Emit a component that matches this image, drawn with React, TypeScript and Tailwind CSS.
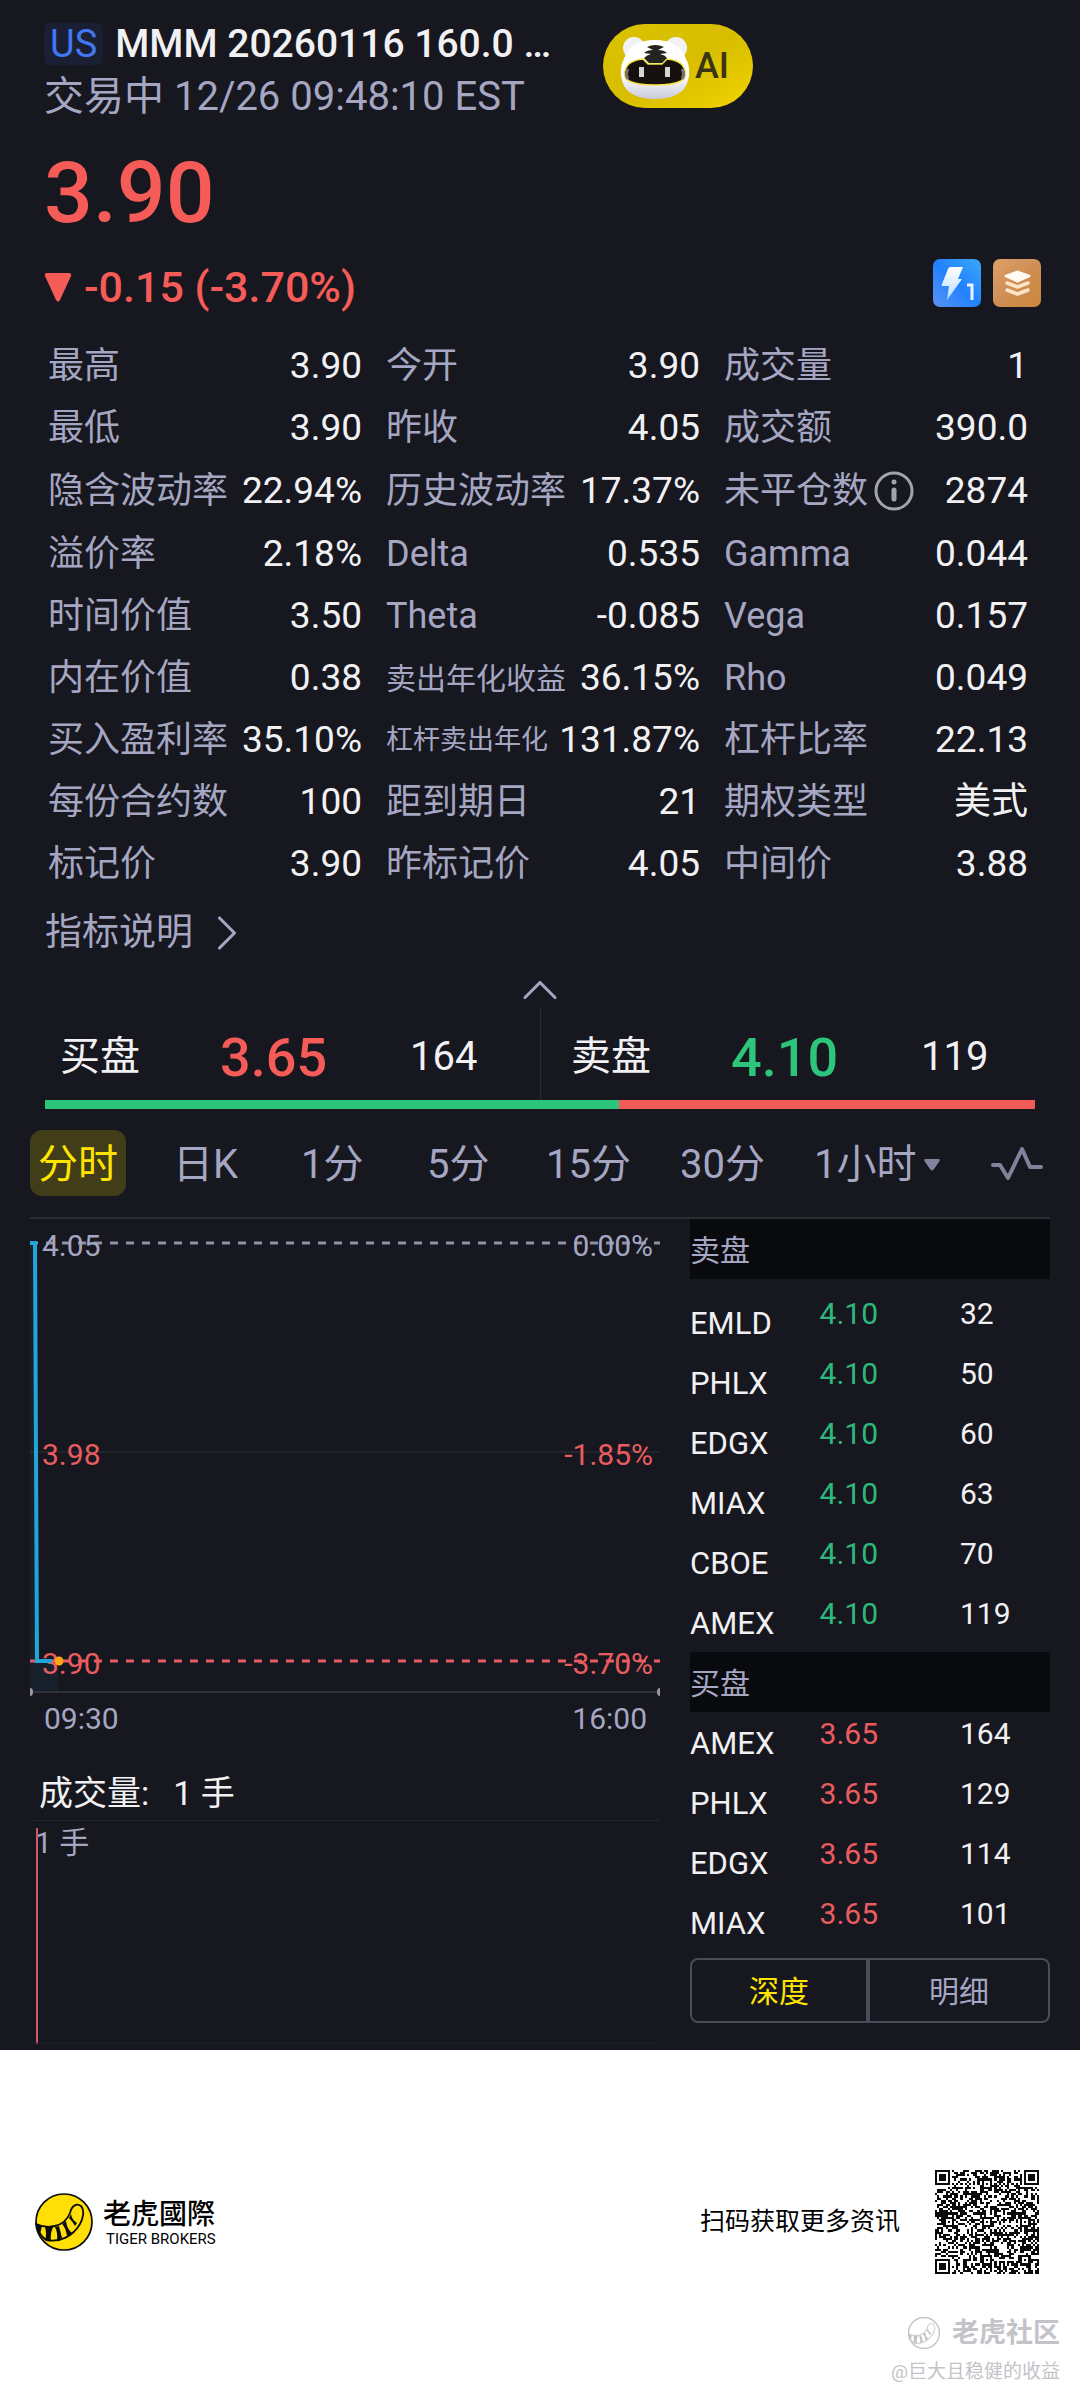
import { ChevronRight, ChevronUp } from "lucide-react";
import { clsx } from "clsx";

type Stat = { label: string; value: string; size?: "sm" | "xs"; info?: boolean };

const STATS: Stat[] = [
	{ label: "最高", value: "3.90" },
	{ label: "今开", value: "3.90" },
	{ label: "成交量", value: "1" },
	{ label: "最低", value: "3.90" },
	{ label: "昨收", value: "4.05" },
	{ label: "成交额", value: "390.0" },
	{ label: "隐含波动率", value: "22.94%" },
	{ label: "历史波动率", value: "17.37%" },
	{ label: "未平仓数", value: "2874", info: true },
	{ label: "溢价率", value: "2.18%" },
	{ label: "Delta", value: "0.535" },
	{ label: "Gamma", value: "0.044" },
	{ label: "时间价值", value: "3.50" },
	{ label: "Theta", value: "-0.085" },
	{ label: "Vega", value: "0.157" },
	{ label: "内在价值", value: "0.38" },
	{ label: "卖出年化收益", value: "36.15%", size: "sm" },
	{ label: "Rho", value: "0.049" },
	{ label: "买入盈利率", value: "35.10%" },
	{ label: "杠杆卖出年化", value: "131.87%", size: "xs" },
	{ label: "杠杆比率", value: "22.13" },
	{ label: "每份合约数", value: "100" },
	{ label: "距到期日", value: "21" },
	{ label: "期权类型", value: "美式" },
	{ label: "标记价", value: "3.90" },
	{ label: "昨标记价", value: "4.05" },
	{ label: "中间价", value: "3.88" },
];

const TABS = ["分时", "日K", "1分", "5分", "15分", "30分"];

const ASKS: [string, string, number][] = [
	["EMLD", "4.10", 32],
	["PHLX", "4.10", 50],
	["EDGX", "4.10", 60],
	["MIAX", "4.10", 63],
	["CBOE", "4.10", 70],
	["AMEX", "4.10", 119],
];

const BIDS: [string, string, number][] = [
	["AMEX", "3.65", 164],
	["PHLX", "3.65", 129],
	["EDGX", "3.65", 114],
	["MIAX", "3.65", 101],
];

function TigerFace() {
	return (
		<svg viewBox="0 0 72 66" className="h-[66px] w-[72px]" aria-hidden="true">
			<defs>
				<linearGradient id="face" x1="0" y1="0" x2="0" y2="1">
					<stop offset="0.6" stopColor="#ffffff" />
					<stop offset="1" stopColor="#c9c9dc" />
				</linearGradient>
			</defs>
			<circle cx="15" cy="15" r="11" fill="#f1f1f6" />
			<circle cx="57" cy="15" r="11" fill="#f1f1f6" />
			<path
				d="M36 7C54 7 64 15 67 26C72 34 71 48 65 56C59 63 48 66 36 66C24 66 13 63 7 56C1 48 0 34 5 26C8 15 18 7 36 7Z"
				fill="url(#face)"
			/>
			<path
				d="M7 35C9 29 15 27 24 26L29 31H43L48 26C57 27 63 29 65 35C68 41 66 46 62 48C54 52 45 52 36 52C27 52 18 52 10 48C6 46 4 41 7 35Z"
				fill="#17110d"
				stroke="#f1e23c"
				strokeWidth="1.5"
			/>
			<path d="M9 36Q6 41 9 46" stroke="#77707c" strokeWidth="3" fill="none" />
			<path d="M63 36Q66 41 63 46" stroke="#77707c" strokeWidth="3" fill="none" />
			<rect x="20" y="34" width="5" height="10" fill="#d4d4d8" />
			<rect x="46" y="34" width="5" height="10" fill="#d4d4d8" />
			<path
				d="M28 14Q36 10 45 14L39 17Q45 17 48 20L41 21Q46 22 48 25L43 30H30L25 25Q28 22 32 21L25 20Q28 17 34 17Z"
				fill="#24231f"
			/>
		</svg>
	);
}

function TailLogo({ muted = false }: { muted?: boolean }) {
	const ink = muted ? "#c3c3c8" : "#0b0b0b";
	return (
		<svg
			viewBox="0 0 58 58"
			className={muted ? "h-8 w-8" : "h-[58px] w-[58px]"}
			aria-hidden="true"
		>
			<circle
				cx="29"
				cy="29"
				r="28"
				fill={muted ? "#ffffff" : "#ffdf05"}
				stroke={ink}
				strokeWidth={muted ? 2.5 : 1.7}
			/>
			<path
				d="M1 31C12 36 29 35 35 20C37 12 42 10 46 13C50 17 48 26 45 31C38 43 25 50 11 47Q4 42 1 31Z"
				fill={muted ? "#ffffff" : "#ffdf05"}
				stroke={ink}
				strokeWidth="1.8"
			/>
			<path
				d="M1 31L7 33L5 41ZM10 34L18 34Q15 41 16 48L10 47Q12 41 10 34ZM20 34L24 33L27 45L22 47Q23 40 20 34ZM27 31L31 28Q32 36 37 40L32 43Q31 35 27 31ZM34 25L36 21Q37 27 42 30L40 33Q37 28 34 25Z"
				fill={ink}
			/>
		</svg>
	);
}

const QR_SIZE = 49;
const ALIGN = [6, 24, 42];

function ring(dx: number, dy: number, dark: number[]) {
	return dark.includes(Math.max(Math.abs(dx), Math.abs(dy)));
}

function qrModule(x: number, y: number, noise: number) {
	const last = QR_SIZE - 1;
	for (const [fx, fy] of [[3, 3], [last - 3, 3], [3, last - 3]]) {
		const dx = x - fx;
		const dy = y - fy;
		if (Math.abs(dx) <= 4 && Math.abs(dy) <= 4) return ring(dx, dy, [0, 1, 3]);
	}
	for (const ax of ALIGN) {
		for (const ay of ALIGN) {
			if ((ax === 6 && ay !== 24) || (ay === 6 && ax !== 24)) continue;
			if (Math.abs(x - ax) <= 2 && Math.abs(y - ay) <= 2) {
				return ring(x - ax, y - ay, [0, 2]);
			}
		}
	}
	if (x === 6) return y % 2 === 0;
	if (y === 6) return x % 2 === 0;
	return noise > 0.48;
}

function buildQrPath() {
	let seed = 20260116;
	let d = "";
	for (let y = 0; y < QR_SIZE; y++) {
		for (let x = 0; x < QR_SIZE; x++) {
			seed = (seed * 1103515245 + 12345) % 2147483648;
			if (qrModule(x, y, seed / 2147483648)) d += `M${x} ${y}h1v1h-1z`;
		}
	}
	return d;
}

const QR_PATH = buildQrPath();

function Header() {
	return (
		<header className="pt-[17px] pr-[39px] pl-11">
			<div className="flex items-start gap-[41px]">
				<div className="w-[518px]">
					<h1 className="flex items-center gap-3 text-[39px] leading-[54px] font-medium text-[#f1f1f3]">
						<span className="rounded-md bg-[#1b1f33] px-[6px] text-[38px] leading-[42px] font-normal text-[#4277f2]">
							US
						</span>
						<span className="truncate">MMM 20260116 160.0 …</span>
					</h1>
					<p className="text-[40px] leading-[52px] whitespace-nowrap text-[#a5a6c2]">
						交易中 12/26 09:48:10 EST
					</p>
				</div>
				<button
					type="button"
					className="mt-[7px] flex h-[84px] w-[150px] items-center gap-1 rounded-[42px] bg-gradient-to-br from-[#d9c300] via-[#d8bd00] to-[#f0d400] pl-4"
				>
					<TigerFace />
					<span className="text-[36px] leading-none font-medium text-[#3a3414]">AI</span>
				</button>
			</div>
			<div className="mt-5 text-[86px] leading-[100px] font-medium text-[#f55b57]">3.90</div>
			<div className="mt-4 flex items-start justify-between">
				<div className="flex items-center gap-3 text-[43px] leading-[56px] font-medium text-[#f55b57]">
					<svg viewBox="0 0 28 30" className="h-[30px] w-7" aria-hidden="true">
						<path d="M3 1H25Q28 1 27 4L16 28Q14 31 12 28L1 4Q0 1 3 1Z" fill="currentColor" />
					</svg>
					-0.15 (-3.70%)
				</div>
				<div className="flex gap-3">
					<svg viewBox="0 0 48 48" className="h-12 w-12" role="img" aria-label="Level 1">
						<defs>
							<linearGradient id="lv1" x1="0" y1="1" x2="1" y2="0">
								<stop offset="0" stopColor="#5b93f5" />
								<stop offset="0.5" stopColor="#2182ff" />
								<stop offset="1" stopColor="#3ca8f8" />
							</linearGradient>
							<linearGradient id="bolt" x1="0" y1="0" x2="0" y2="1">
								<stop offset="0" stopColor="#ffffff" />
								<stop offset="1" stopColor="#b9ddff" />
							</linearGradient>
						</defs>
						<rect width="48" height="48" rx="7" fill="url(#lv1)" />
						<path
							d="M17 8H30L25 20H29L14 41L16 27H10Q8 27 9 25L15 10Q16 8 17 8Z"
							fill="url(#bolt)"
						/>
						<path d="M34 26H39V41" fill="none" stroke="#e8f4ff" strokeWidth="3" />
					</svg>
					<svg viewBox="0 0 48 48" className="h-12 w-12" role="img" aria-label="Depth">
						<defs>
							<linearGradient id="depth" x1="0" y1="0" x2="1" y2="1">
								<stop offset="0" stopColor="#dda168" />
								<stop offset="0.5" stopColor="#cf8e55" />
								<stop offset="1" stopColor="#cb8739" />
							</linearGradient>
						</defs>
						<rect width="48" height="48" rx="7" fill="url(#depth)" />
						<path
							d="M23 12Q24.500 11 26 12L37 16Q38 17 37 18L26 23Q24.500 24 23 23L12 18Q11 17 12 16Z"
							fill="#fffaf2"
						/>
						<path
							d="M14 24L24.500 28L35 24M14 31L24.500 35L35 31"
							fill="none"
							stroke="#fce4c8"
							strokeWidth="3.500"
							strokeLinecap="round"
							strokeLinejoin="round"
						/>
					</svg>
				</div>
			</div>
		</header>
	);
}

function StatGrid() {
	return (
		<dl className="mt-5 grid grid-cols-3 gap-x-6 pr-[42px] pl-12">
			{STATS.map((s, i) => (
				<div
					key={s.label}
					className={clsx(
						"flex items-center justify-between whitespace-nowrap",
						i > 5 && i < 9 ? "h-16" : "h-[62px]",
						i % 3 === 2 && "pr-[10px]",
					)}
				>
					<dt
						className={clsx(
							"flex items-center gap-[6px] text-[#a5a6c2]",
							!s.size && "text-[36px]",
							s.size === "sm" && "text-[30px]",
							s.size === "xs" && "text-[27px]",
						)}
					>
						{s.label}
						{s.info && (
							<svg viewBox="0 0 40 40" className="h-10 w-10" aria-hidden="true">
								<circle cx="20" cy="20" r="18" fill="none" stroke="#a3a3ad" strokeWidth="3" />
								<circle cx="20" cy="11" r="2.500" fill="#a3a3ad" />
								<path d="M20 19V28" stroke="#a3a3ad" strokeWidth="5" strokeLinecap="round" />
							</svg>
						)}
					</dt>
					<dd className="text-[37px] text-[#f1f1f3]">{s.value}</dd>
				</div>
			))}
		</dl>
	);
}

function Quote({ label, price, size, up }: { label: string; price: string; size: number; up?: boolean }) {
	return (
		<div
			className={clsx(
				"grid h-[92px] grid-cols-[160px_190px_1fr] items-center pt-[6px] text-[40px] text-[#f1f1f3]",
				up ? "border-l border-[#2a2b33] pl-[30px]" : "pl-[15px]",
			)}
		>
			<span>{label}</span>
			<span className={clsx("text-[54px] font-medium", up ? "text-[#2cc57b]" : "text-[#f55b57]")}>
				{price}
			</span>
			<span>{size}</span>
		</div>
	);
}

function Periods() {
	return (
		<nav className="mx-[30px] grid grid-cols-[143fr_128fr_126fr_119fr_134fr_134fr_176fr_60fr] items-center justify-items-start border-b-2 border-[#2b2c31] py-[21px] text-[40px] leading-[62px] whitespace-nowrap text-[#a5a6c2]">
			{TABS.map((t, i) => (
				<button
					key={t}
					type="button"
					className={clsx("pt-1", i === 0 && "rounded-xl bg-[#423d19] px-2 text-[#ffe400]")}
				>
					{t}
				</button>
			))}
			<button type="button" className="flex items-center gap-2 pt-1">
				1小时
				<svg viewBox="0 0 16 12" className="h-3 w-4" aria-hidden="true">
					<path d="M2 0H14Q17 0 15 3L10 10Q8 13 6 10L1 3Q-1 0 2 0Z" fill="#81839d" />
				</svg>
			</button>
			<button type="button" aria-label="指标">
				<svg viewBox="0 0 54 38" className="h-[38px] w-[54px]" aria-hidden="true">
					<path
						d="M3 21H10L18 34L32 5L40 23H51"
						fill="none"
						stroke="#81839d"
						strokeWidth="4"
						strokeLinecap="round"
						strokeLinejoin="round"
					/>
				</svg>
			</button>
		</nav>
	);
}

function PriceChart() {
	return (
		<svg viewBox="0 0 630 548" className="block w-full text-[30px]">
			<path d="M0 233H630" stroke="#303138" />
			<path d="M0 473H630" stroke="#3a3b42" strokeWidth="1.500" />
			<path d="M0 24H630" stroke="#8f90a6" strokeWidth="3" strokeDasharray="8 8" />
			<path d="M0 442H630" stroke="#e95c5f" strokeWidth="3" strokeDasharray="8 8" />
			<path d="M0 24H5L8 442H28V472H0Z" fill="#1e9fd0" fillOpacity="0.08" />
			<g fill="#a5a6c2">
				<text x="12" y="37">4.05</text>
				<text x="623" y="37" textAnchor="end">0.00%</text>
				<text x="14" y="510">09:30</text>
				<text x="617" y="510" textAnchor="end">16:00</text>
			</g>
			<g fill="#e95c5f">
				<text x="12" y="246">3.98</text>
				<text x="623" y="246" textAnchor="end">-1.85%</text>
				<text x="12" y="455">3.90</text>
				<text x="623" y="455" textAnchor="end">-3.70%</text>
			</g>
			<path d="M0 24H5L7 442H22" fill="none" stroke="#22a5d8" strokeWidth="4" />
			<circle cx="29" cy="442" r="4.500" fill="#ffa811" />
			<path d="M0 469Q3 469 3 473T0 477ZM630 469Q627 469 627 473T630 477Z" fill="#9a9a9e" />
		</svg>
	);
}

function VolumeChart() {
	return (
		<>
			<h2 className="flex h-[54px] items-center gap-6 border-b border-[#22232b] pl-[9px] text-[34px] text-[#f1f1f3]">
				<span>成交量:</span>
				<span>1 手</span>
			</h2>
			<svg viewBox="0 0 630 229" className="block w-full text-[30px]">
				<text x="5" y="32" fill="#a5a6c2">1 手</text>
				<path d="M7 7V223" stroke="#cf5a60" strokeWidth="2" />
				<path d="M2 222H630" stroke="#22232b" />
			</svg>
		</>
	);
}

function BookSide({ title, rows, ask }: { title: string; rows: [string, string, number][]; ask?: boolean }) {
	return (
		<>
			<h2 className="bg-[#090a0e] pt-1 text-[30px] leading-[56px] text-[#a5a6c2]">{title}</h2>
			<table className={clsx("w-full table-fixed text-left text-[30px]", ask && "mt-[13px]")}>
				<tbody>
					{rows.map(([venue, price, size]) => (
						<tr key={venue} className="h-[60px] leading-9 text-[#f1f1f3]">
							<th scope="row" className="w-[36%] pt-[3px] text-[31px] font-normal">
								{venue}
							</th>
							<td className={clsx("w-[39%] pb-4", ask ? "text-[#2fb87a]" : "text-[#e95c5f]")}>
								{price}
							</td>
							<td className="pb-4">{size}</td>
						</tr>
					))}
				</tbody>
			</table>
		</>
	);
}

function Footer() {
	return (
		<footer className="bg-white text-black">
			<div className="flex items-center justify-between pt-[120px] pr-[41px] pl-[35px]">
				<div className="flex items-center gap-[10px]">
					<TailLogo />
					<div>
						<div className="font-['Noto_Sans_CJK_TC',sans-serif] text-[28px] leading-[34px] font-medium">
							老虎國際
						</div>
						<div className="pl-[3px] text-[15px] leading-5">TIGER BROKERS</div>
					</div>
				</div>
				<div className="flex items-center gap-[35px] text-[25px]">
					<span>扫码获取更多资讯</span>
					<svg
						viewBox="0 0 49 49"
						className="h-[104px] w-[104px]"
						shapeRendering="crispEdges"
						role="img"
						aria-label="QR"
					>
						<path d={QR_PATH} fill="#0b0b0b" />
					</svg>
				</div>
			</div>
			<div className="flex flex-col items-end pt-[38px] pr-5 pb-1 text-[#c3c3c8]">
				<div className="flex items-center gap-3 text-[27px] leading-[42px] font-bold">
					<TailLogo muted />
					老虎社区
				</div>
				<div className="text-[19px] leading-[35px]">@巨大且稳健的收益</div>
			</div>
		</footer>
	);
}

export default function App() {
	return (
		<div className="min-h-screen bg-white font-[Roboto,'Noto_Sans_CJK_SC',sans-serif]">
			<main className="bg-[#16171f]">
				<Header />
				<StatGrid />
				<a
					href="#metrics"
					className="flex h-[76px] items-center gap-1 pl-[45px] text-[37px] text-[#a5a6c2]"
				>
					指标说明
					<ChevronRight className="h-[60px] w-[60px]" strokeWidth={1.25} />
				</a>
				<button type="button" aria-label="收起" className="flex h-[37px] w-full items-center justify-center text-[#a5a6c2]">
					<ChevronUp className="h-[60px] w-[60px]" strokeWidth={1.25} />
				</button>
				<section className="px-[45px]">
					<div className="grid grid-cols-2">
						<Quote label="买盘" price="3.65" size={164} />
						<Quote label="卖盘" price="4.10" size={119} up />
					</div>
					<div className="flex h-[9px]">
						<div className="bg-[#2cc57b]" style={{ width: `${(164 / (164 + 119)) * 100}%` }} />
						<div className="flex-1 bg-[#f05a57]" />
					</div>
				</section>
				<Periods />
				<section className="mx-[30px] grid grid-cols-[7fr_4fr] gap-[30px]">
					<div>
						<PriceChart />
						<VolumeChart />
					</div>
					<div>
						<BookSide title="卖盘" rows={ASKS} ask />
						<BookSide title="买盘" rows={BIDS} />
						<div className="mt-[6px] grid grid-cols-2 divide-x-4 divide-[#4b4c59] rounded-lg border-2 border-[#4b4c59] text-[30px] leading-[59px]">
							<button type="button" className="pt-[2px] text-[#ffe400]">
								深度
							</button>
							<button type="button" className="pt-[2px] text-[#a5a6c2]">
								明细
							</button>
						</div>
					</div>
				</section>
			</main>
			<Footer />
		</div>
	);
}
